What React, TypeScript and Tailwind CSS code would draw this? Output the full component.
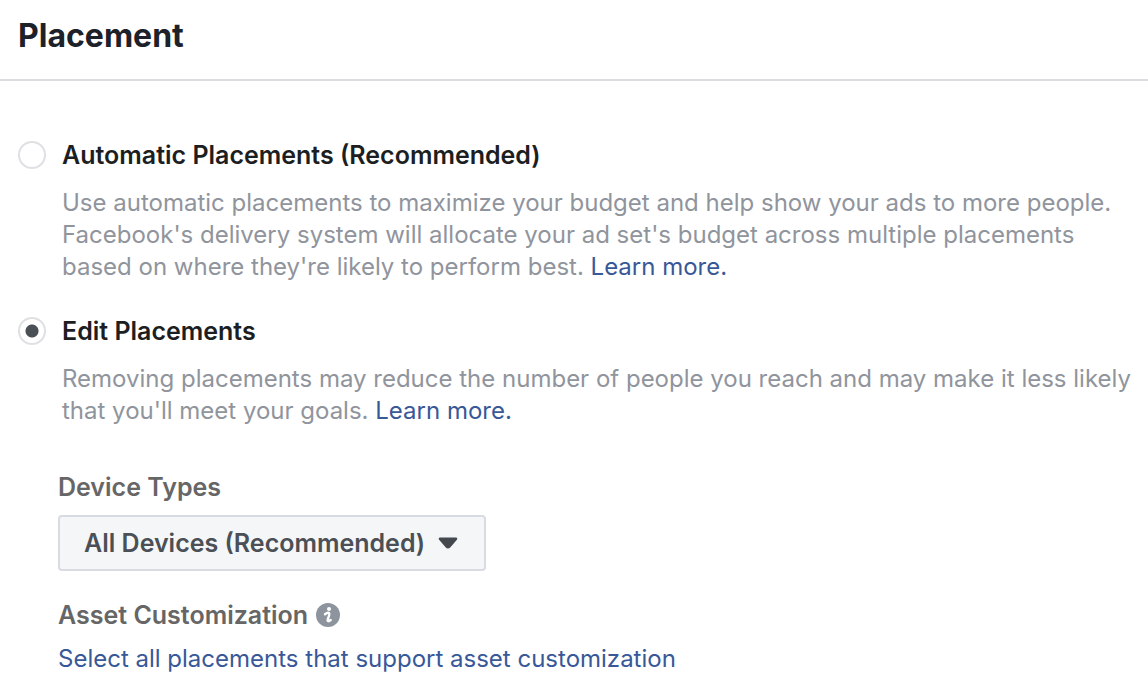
const autoText =
  "Use automatic placements to maximize your budget and help show your ads to more people. Facebook's delivery system will allocate your ad set's budget across multiple placements based on where they're likely to perform best.";

const editText =
  "Removing placements may reduce the number of people you reach and may make it less likely that you'll meet your goals.";

type OptionProps = {
  id: string;
  title: string;
  text: string;
  checked?: boolean;
};

const PlacementOption = ({ id, title, text, checked }: OptionProps) => (
  <div className="flex gap-4">
    <input
      type="radio"
      id={id}
      name="placement"
      defaultChecked={checked}
      className="mt-0.5 size-7 shrink-0 appearance-none rounded-full border-2 border-[#dfe0e4] bg-white checked:bg-[radial-gradient(circle,#4b4f56_6px,transparent_7px)]"
    />
    <div>
      <label
        htmlFor={id}
        className="block text-[25px] leading-8 font-semibold text-[#1c1e21]"
      >
        {title}
      </label>
      <p className="mt-4 text-2xl text-[#90949c]">
        {text}{" "}
        <a href="#" className="text-[#385898]">
          Learn more.
        </a>
      </p>
    </div>
  </div>
);

const App = () => {
  return (
    <main className="min-h-screen bg-white font-['Inter',sans-serif]">
      <header className="border-b-2 border-[#dadce0] px-[18px] pt-4 pb-[23px]">
        <h1 className="text-[32px] leading-10 font-bold text-[#1d2129]">
          Placement
        </h1>
      </header>

      <div className="pt-[58px] pr-2 pl-[18px]">
        <div className="flex flex-col gap-8">
          <PlacementOption
            id="automatic"
            title="Automatic Placements (Recommended)"
            text={autoText}
          />
          <PlacementOption id="edit" title="Edit Placements" text={editText} checked />
        </div>

        <div className="mt-11 pl-10">
          <label
            htmlFor="devices"
            className="block text-[25px] leading-8 font-semibold text-[#666]"
          >
            Device Types
          </label>
          <div className="relative mt-3 w-[428px]">
            <select
              id="devices"
              className="h-14 w-full appearance-none rounded-sm border-2 border-[#d8dbe1] bg-[#f5f6f7] px-6 text-[25px] leading-8 font-semibold text-[#4b4f56]"
            >
              <option>All Devices (Recommended)</option>
            </select>
            <svg
              viewBox="0 0 20 12"
              className="pointer-events-none absolute top-[22px] right-7 h-3 w-5 fill-[#444950]"
            >
              <path d="M2 .5h16c1.300 0 1.700 1.400.9 2.300l-6.700 7.800c-1.200 1.300-3.200 1.300-4.400 0L1.100 2.800C.3 1.900.7.5 2 .5Z" />
            </svg>
          </div>

          <div className="mt-7 flex items-center gap-2">
            <h2 className="text-[25px] leading-8 font-semibold text-[#666]">
              Asset Customization
            </h2>
            <svg viewBox="0 0 24 24" className="size-6">
              <circle cx="12" cy="12" r="12" fill="#8d949e" />
              <circle cx="13" cy="6" r="2" fill="#fff" />
              <path
                d="M9 11.200c1.200-.9 3-1.700 4-1.200 1 .6-.1 3-.8 5-.6 1.700-.9 3.200.1 3.200.8 0 1.700-.6 2.400-1.200"
                fill="none"
                stroke="#fff"
                strokeWidth="2.400"
                strokeLinecap="round"
              />
            </svg>
          </div>
          <a href="#" className="mt-3 block text-2xl text-[#385898]">
            Select all placements that support asset customization
          </a>
        </div>
      </div>
    </main>
  );
};

export default App;
